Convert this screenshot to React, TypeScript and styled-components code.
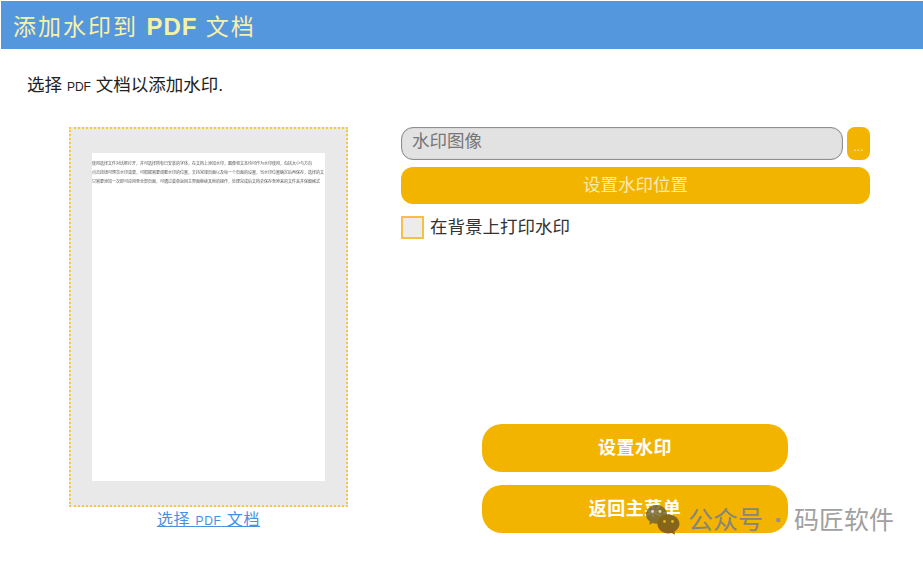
import { FC } from 'react';
import styled, { createGlobalStyle } from 'styled-components';

const CJK = `'Liberation Sans', 'Noto Sans CJK SC', sans-serif`;
const AMBER = '#f3b400';

const DOC_LINES = [
  '使用选择文件对话框打开，并可选择所有已安装的字体，在文档上添加水印，图像和文本均可作为水印使用，包括大小与方向',
  '点击按钮可预览水印效果，可根据需要调整水印的位置，支持常规页面以及每一个页面的设置，当水印位置确定后再保存，选择的文',
  '只需要添加一次即可应用至全部页面，可通过菜单返回主界面继续其他的操作，处理完成后文档会保存至原来的文件夹并保留格式',
];

const App: FC = () => {
  return (
    <Page>
      <GlobalStyle />
      <Header>
        <Title>
          添加水印到 <b>PDF</b> 文档
        </Title>
      </Header>
      <Intro>
        选择 <small>PDF</small> 文档以添加水印.
      </Intro>
      <Body>
        <LeftColumn>
          <DropZone>
            <Sheet>
              {DOC_LINES.map((line) => (
                <DocLine key={line}>{line}</DocLine>
              ))}
            </Sheet>
          </DropZone>
          <PickLink href="#">
            选择 <small>PDF</small> 文档
          </PickLink>
        </LeftColumn>
        <RightColumn>
          <InputRow>
            <ImageInput>水印图像</ImageInput>
            <BrowseButton>...</BrowseButton>
          </InputRow>
          <PositionButton>设置水印位置</PositionButton>
          <CheckRow>
            <CheckBox />
            <CheckLabel>在背景上打印水印</CheckLabel>
          </CheckRow>
          <Actions>
            <ActionButton>设置水印</ActionButton>
            <ActionButton>返回主菜单</ActionButton>
          </Actions>
        </RightColumn>
      </Body>
      <Watermark>
        <WeChatMark viewBox="0 0 35 31" aria-hidden="true">
          <path
            d="M11.500 1C5.500 1 1 5.200 1 10.400c0 3 1.500 5.500 4 7.300L4 21l3.700-1.900c1.300.4 2.600.6 3.800.6 6 0 10.500-4.100 10.500-9.300S17.500 1 11.500 1z"
            fill="#6d6234"
            fillOpacity="0.82"
          />
          <path
            d="M34.500 20c0-5.200-4.900-9.500-11-9.500s-11 4.300-11 9.500 4.900 9.500 11 9.500c1.100 0 2.200-.1 3.200-.4l3.500 1.700-.9-3c3-1.700 5.200-4.900 5.200-7.800z"
            fill="#84661a"
          />
          <circle cx="7.500" cy="7.500" r="1.400" fill="#fff" fillOpacity="0.7" />
          <circle cx="15" cy="7.500" r="1.400" fill="#fff" fillOpacity="0.7" />
          <circle cx="19.500" cy="17.500" r="1.400" fill="#e8b31a" />
          <circle cx="27.500" cy="17.500" r="1.400" fill="#e8b31a" />
        </WeChatMark>
        <WatermarkText>公众号</WatermarkText>
        <WatermarkDot>·</WatermarkDot>
        <WatermarkText $muted>码匠软件</WatermarkText>
      </Watermark>
    </Page>
  );
};

export default App;

const GlobalStyle = createGlobalStyle`
  html, body {
    margin: 0;
    padding: 0;
    background: #fff;
  }
`;

const Page = styled.div`
  position: relative;
  width: 923px;
  height: 577px;
  padding-top: 1px;
  box-sizing: border-box;
  overflow: hidden;
  font-family: ${CJK};
  background: #fff;
`;

const Header = styled.div`
  height: 48px;
  margin-left: 1px;
  padding-left: 12px;
  display: flex;
  align-items: center;
  background: #5497dd;
`;

const Title = styled.h1`
  margin: 0;
  font-size: 23px;
  font-weight: 400;
  letter-spacing: 2px;
  color: #f7f0ac;
  white-space: pre;

  b {
    font-size: 24px;
    font-weight: 700;
    letter-spacing: 1px;
  }
`;

const Intro = styled.div`
  height: 20px;
  margin: 26px 0 32px 27px;
  font-size: 17.500px;
  line-height: 20px;
  color: #222;

  small {
    font-size: 12px;
  }
`;

const Body = styled.div`
  display: flex;
  align-items: flex-start;
  padding-left: 69px;
`;

const LeftColumn = styled.div`
  width: 279px;
  display: flex;
  flex-direction: column;
  align-items: center;
`;

const DropZone = styled.div`
  width: 279px;
  height: 380px;
  padding: 24px 21px;
  box-sizing: border-box;
  border: 2px dotted #f9c93c;
  background: #e9e9e9;
`;

const Sheet = styled.div`
  height: 100%;
  padding: 6px 0 0;
  box-sizing: border-box;
  background: #fff;
  overflow: hidden;
`;

const DocLine = styled.div`
  font-size: 4px;
  line-height: 9px;
  white-space: nowrap;
  color: #555;
  filter: blur(0.3px);
`;

const PickLink = styled.a`
  margin-top: 3px;
  font-size: 16px;
  line-height: 20px;
  letter-spacing: 0.7px;
  color: #4a90e2;
  text-decoration: underline;

  small {
    font-size: 12px;
  }
`;

const RightColumn = styled.div`
  width: 469px;
  margin-left: 53px;
  display: flex;
  flex-direction: column;
`;

const InputRow = styled.div`
  display: flex;
  justify-content: space-between;
`;

const ImageInput = styled.div`
  width: 442px;
  height: 33px;
  padding-left: 10px;
  box-sizing: border-box;
  border: 1px solid #8f8f8f;
  box-shadow: inset 0 0 1px #8f8f8f;
  border-radius: 12px;
  background: #e2e2e2;
  font-size: 17.500px;
  line-height: 27px;
  color: #777;
`;

const BrowseButton = styled.div`
  width: 23px;
  height: 33px;
  border-radius: 8px;
  background: ${AMBER};
  font-size: 12px;
  line-height: 40px;
  text-align: center;
  color: #fbeec0;
`;

const PositionButton = styled.div`
  height: 37px;
  margin-top: 7px;
  border-radius: 12px;
  background: ${AMBER};
  font-size: 17.500px;
  line-height: 37px;
  text-align: center;
  color: #fbeab0;
`;

const CheckRow = styled.div`
  margin-top: 12px;
  display: flex;
  align-items: center;
  gap: 6px;
`;

const CheckBox = styled.div`
  width: 23px;
  height: 23px;
  box-sizing: border-box;
  border: 2px solid #f4c04a;
  background: #ececec;
`;

const CheckLabel = styled.span`
  font-size: 17.500px;
  line-height: 23px;
  color: #333;
`;

const Actions = styled.div`
  margin: 185px 0 0 81px;
  width: 306px;
  display: flex;
  flex-direction: column;
  gap: 13px;
`;

const ActionButton = styled.div`
  height: 48px;
  border-radius: 20px;
  background: ${AMBER};
  font-size: 18px;
  font-weight: 700;
  letter-spacing: 0.5px;
  line-height: 48px;
  text-align: center;
  color: #fff;
`;

const Watermark = styled.div`
  position: absolute;
  left: 645px;
  top: 503px;
  display: flex;
  align-items: center;
  gap: 8px;
`;

const WeChatMark = styled.svg`
  width: 35px;
  height: 31px;
`;

const WatermarkText = styled.span<{ $muted?: boolean }>`
  font-size: 25px;
  line-height: 32px;
  margin-top: 1px;
  color: ${({ $muted }) => ($muted ? '#a0a0a0' : '#85857c')};
`;

const WatermarkDot = styled.span`
  width: 15px;
  font-size: 26px;
  font-weight: 700;
  line-height: 32px;
  text-align: center;
  color: #909090;
`;
